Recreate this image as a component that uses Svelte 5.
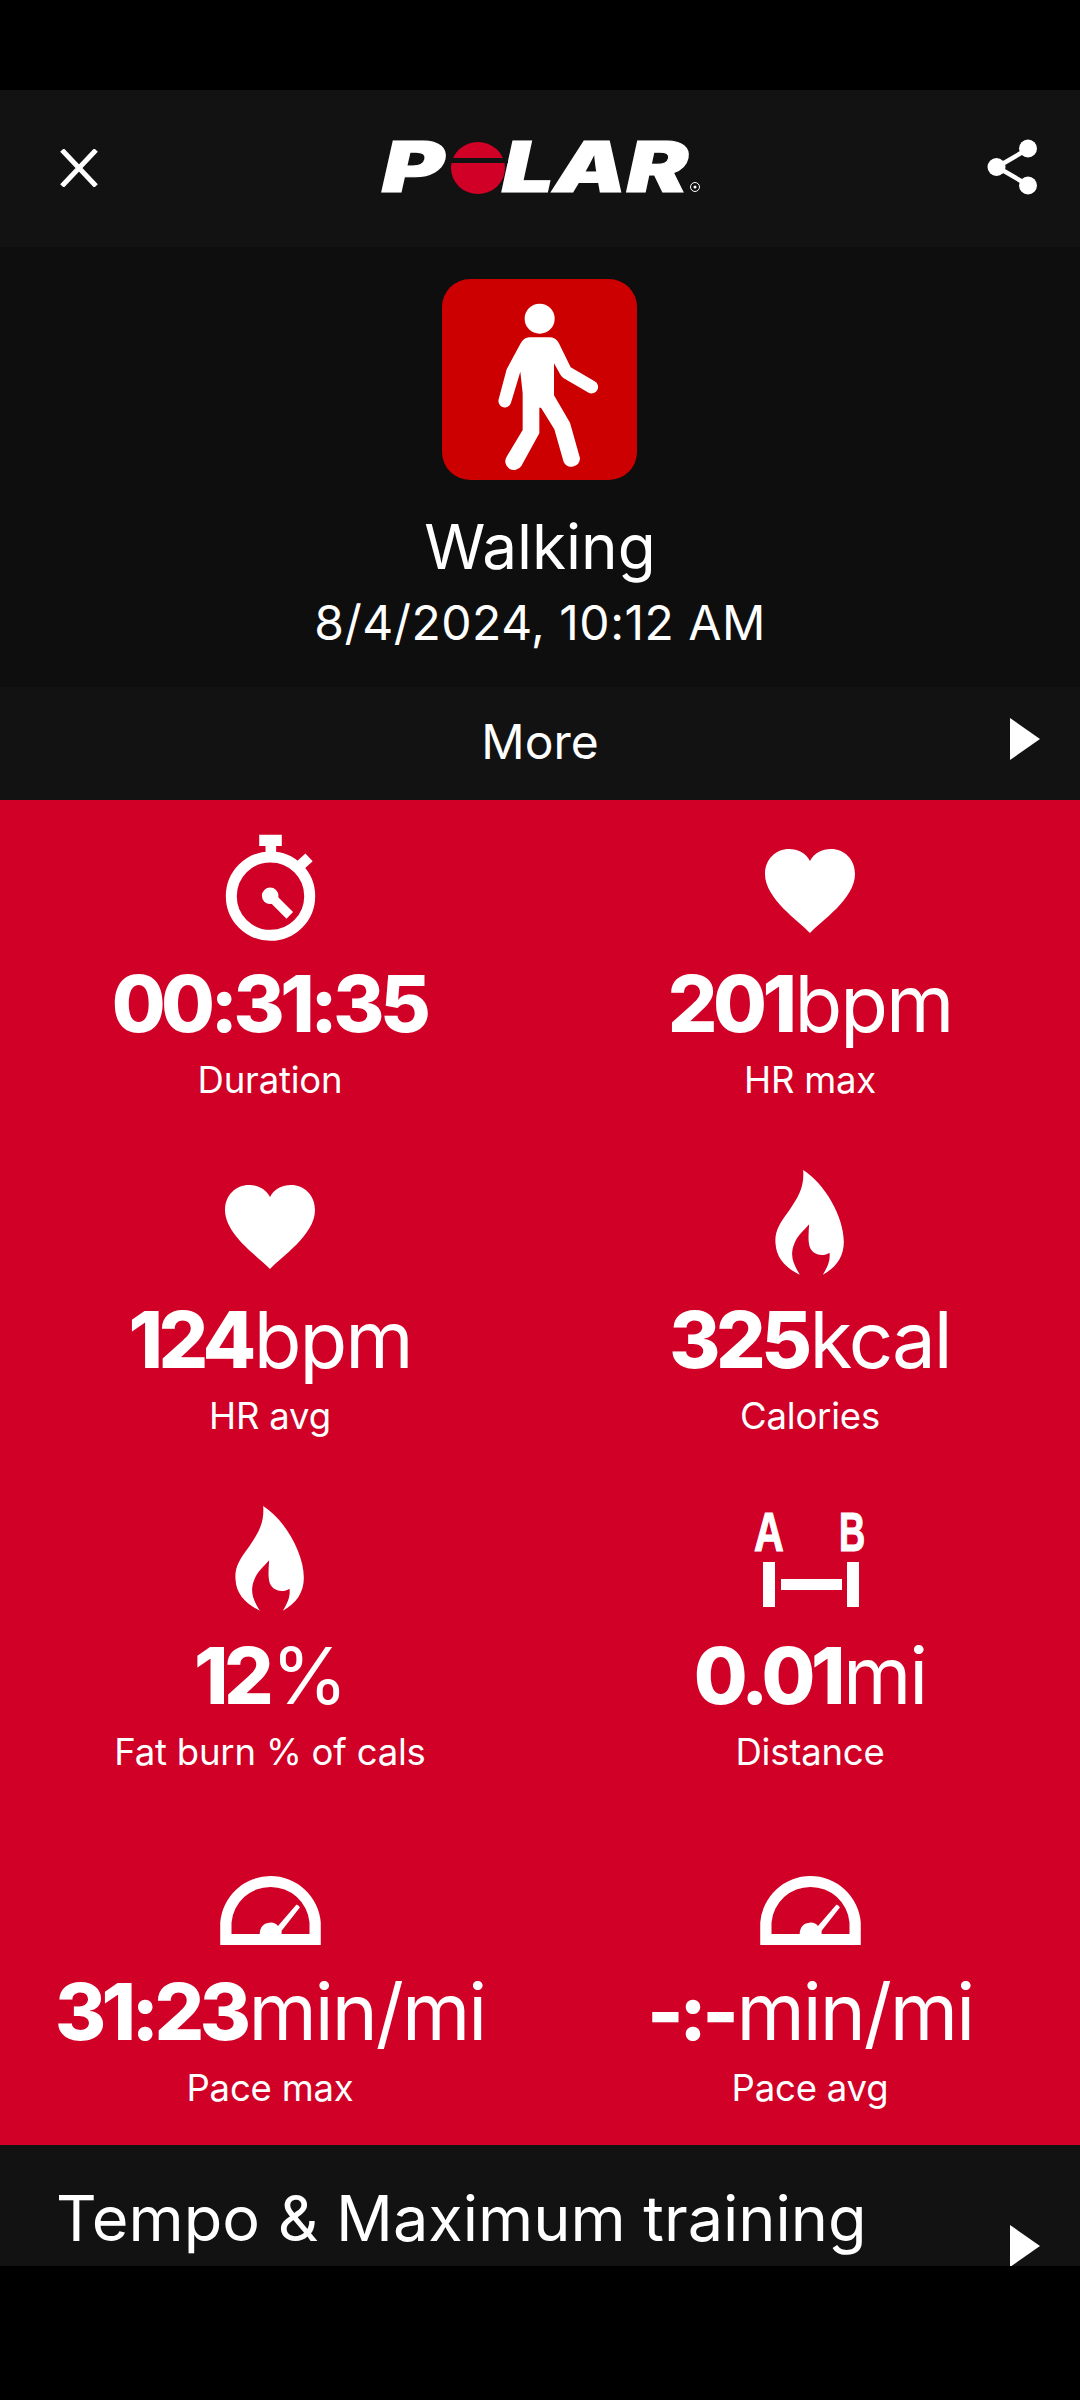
<script>
  const stats = [
    { icon: 'watch', num: '00:31:35', unit: '', label: 'Duration' },
    { icon: 'heart', num: '201', unit: 'bpm', label: 'HR max' },
    { icon: 'heart', num: '124', unit: 'bpm', label: 'HR avg' },
    { icon: 'flame', num: '325', unit: 'kcal', label: 'Calories' },
    { icon: 'flame', num: '12', unit: '%', label: 'Fat burn % of cals' },
    { icon: 'dist', num: '0.01', unit: 'mi', label: 'Distance' },
    { icon: 'gauge', num: '31:23', unit: 'min/mi', label: 'Pace max' },
    { icon: 'gauge', num: '-:-', unit: 'min/mi', label: 'Pace avg' }
  ];
</script>

<div class="screen">
  <div class="status"></div>
  <header class="top">
    <svg class="close" viewBox="0 0 38 38"><path d="M2 1 L36 37 M36 1 L2 37" stroke="#fff" stroke-width="5" /></svg>
    <svg class="logo" viewBox="-20 -30 357 112">
      <g class="logotext">
        <text x="-2" y="50" textLength="62" lengthAdjust="spacingAndGlyphs">P</text>
        <text x="118" y="50" textLength="186" lengthAdjust="spacingAndGlyphs">LAR</text>
      </g>
      <ellipse cx="94" cy="26" rx="27" ry="26" fill="#d00027" />
      <path d="M64 16 H124 V21 H64 Z" fill="#121212" />
      <circle cx="311" cy="45" r="4.5" fill="none" stroke="#fff" stroke-width="1" />
      <circle cx="311" cy="45" r="1.5" fill="#fff" />
    </svg>
    <svg class="share" viewBox="0 0 50 56">
      <path d="M41 10 L10 28 L41 46" fill="none" stroke="#fff" stroke-width="4.5" />
      <circle cx="41" cy="9.5" r="9" fill="#fff" />
      <circle cx="9.5" cy="28" r="9" fill="#fff" />
      <circle cx="41" cy="46.5" r="9" fill="#fff" />
    </svg>
  </header>

  <section class="hero">
    <div class="tile">
      <svg viewBox="126 57 585 603">
        <circle cx="419" cy="176" r="45" fill="#fff" />
        <path fill="#fff" d="M388 232 H448 Q466 232 476 248 L512 322 L584 364 A18 18 0 0 1 566 398 L490 354 Q484 350 480 342 L462 310 V406 L510 488 L540 595 A26 26 0 0 1 491 606 L463 508 L423 443 H418 V520 L364 618 A26 26 0 0 1 320 590 L368 510 V400 L361 335 L333 428 A19 19 0 0 1 296 418 L320 328 L362 250 Q372 232 388 232 Z" />
      </svg>
    </div>
    <div class="title">Walking</div>
    <div class="date">8/4/2024, 10:12 AM</div>
  </section>

  <div class="more">
    <span>More</span>
    <svg class="arrow" viewBox="0 0 30 42"><path d="M0 0 L30 21 L0 42 Z" fill="#fff" /></svg>
  </div>

  <section class="grid">
    {#each stats as s}
      <div class="cell">
        <div class="icon">
          {#if s.icon === 'watch'}
            <svg class="i-watch" viewBox="370 40 280 325">
              <circle cx="510" cy="227" r="118" fill="none" stroke="#fff" stroke-width="33" />
              <path fill="#fff" d="M476 42 H544 V76 H527 V100 H495 V76 H476 Z" />
              <path d="M598 136 L626 110" stroke="#fff" stroke-width="32" />
              <circle cx="509" cy="226" r="25" fill="#fff" />
              <path d="M509 226 L568 285" stroke="#fff" stroke-width="28" />
            </svg>
          {:else if s.icon === 'heart'}
            <svg class="i-heart" viewBox="0 0 90 84">
              <path fill="#fff" d="M45 84 C34 72 0 50 0 25 C0 10 11 0 24 0 C33 0 41 4 45 12 C49 4 57 0 66 0 C79 0 90 10 90 25 C90 50 56 72 45 84 Z" />
            </svg>
          {:else if s.icon === 'flame'}
            <svg class="i-flame" viewBox="162 30 206 315">
              <path fill="#fff" d="M246 30 C250 80 232 110 205 150 C175 190 160 215 163 250 C165 295 195 325 236 344 C215 310 205 285 220 250 C230 225 250 210 264 193 C262 220 260 245 266 262 C275 285 305 292 325 278 C328 300 320 320 305 344 C345 322 368 290 368 245 C368 170 310 70 246 30 Z" />
            </svg>
          {:else if s.icon === 'dist'}
            <svg class="i-dist" viewBox="-20 -30 152 156">
              <text class="ab" transform="translate(0 39) scale(.75 1)" x="0" y="0">A</text>
              <text class="ab" transform="translate(85 39) scale(.66 1)" x="0" y="0">B</text>
              <rect x="9" y="50" width="12" height="45" fill="#fff" />
              <rect x="93" y="50" width="12" height="45" fill="#fff" />
              <rect x="27" y="67" width="61" height="11" fill="#fff" />
            </svg>
          {:else}
            <svg class="i-gauge" viewBox="88 45 303 220">
              <path fill="#fff" fill-rule="evenodd" d="M88 265 V197 A152 152 0 0 1 391 197 V265 Z M122 232 H207 Q207 200 240 197 Q255 197 262 208 L318 143 Q326 146 328 152 L273 222 V232 H357 V197 A118 118 0 0 0 122 197 Z" />
            </svg>
          {/if}
        </div>
        <div class="value"><b>{s.num}</b><span class="unit">{s.unit}</span></div>
        <div class="label">{s.label}</div>
      </div>
    {/each}
  </section>

  <div class="footer">
    <span class="ftext">Tempo &amp; Maximum training</span>
    <svg class="arrow farrow" viewBox="0 0 30 42"><path d="M0 0 L30 21 L0 42 Z" fill="#fff" /></svg>
  </div>
</div>

<style>
  :global(body) { margin: 0; background: #000; }
  .screen {
    width: 1080px; height: 2400px; background: #000; color: #fff; overflow: hidden;
    display: flex; flex-direction: column;
    font-family: Inter, "Noto Sans", sans-serif;
  }
  .status { height: 90px; flex: none; }
  .top {
    height: 157px; flex: none; background: #121212; box-sizing: border-box;
    display: flex; align-items: center; justify-content: space-between;
    padding: 0 43px 0 60px;
  }
  .close { width: 38px; height: 38px; margin-top: -2px; }
  .logo { width: 357px; height: 112px; margin: -2px 0 0 0; flex: none; }
  .logotext text { font: italic 900 70px Inter, sans-serif; fill: #fff; stroke: #fff; stroke-width: 1.2px; }
  .share { width: 50px; height: 56px; margin-top: -3px; }
  .hero {
    height: 440px; flex: none; background: #0e0e0e; box-sizing: border-box;
    display: flex; flex-direction: column; align-items: center; padding-top: 32px;
  }
  .tile {
    width: 195px; height: 201px; border-radius: 28px; background: #cc0000; margin-right: 2px;
  }
  .tile svg { display: block; width: 195px; height: 201px; }
  .title { font-size: 62px; line-height: 72px; margin-top: 31px; }
  .date { font-size: 48px; line-height: 58px; margin-top: 11px; letter-spacing: 0.5px; }
  .more {
    height: 113px; flex: none; background: #121212; position: relative; box-sizing: border-box;
    display: flex; align-items: center; justify-content: center; padding-bottom: 5px;
    font-size: 48px;
  }
  .arrow { width: 30px; height: 42px; position: absolute; right: 40px; top: 31px; }
  .grid {
    height: 1345px; flex: none; background: #d00027; box-sizing: border-box;
    display: grid; grid-template-columns: 1fr 1fr; grid-template-rows: repeat(4, 336px);
    padding-top: 33px;
  }
  .cell { display: flex; flex-direction: column; align-items: center; }
  .icon { height: 112px; display: flex; align-items: center; justify-content: center; width: 100%; }
  .icon svg { display: block; flex: none; }
  .i-watch { width: 93px; height: 108px; margin-top: -2px; }
  .i-heart { width: 90px; height: 84px; margin-top: 4px; }
  .i-flame { width: 69px; height: 105px; margin: -5px 2px 0 0; }
  .i-dist { width: 152px; height: 156px; margin: -3px 0 0 -1px; }
  .i-gauge { width: 101px; height: 73px; align-self: flex-end; margin-bottom: 8px; }
  .ab { font: 700 55px "Liberation Sans", sans-serif; fill: #fff; stroke: #fff; stroke-width: 1.2px; }
  .value { font-size: 78px; line-height: 94px; margin-top: 12px; white-space: nowrap; }
  .value b { font-weight: 800; letter-spacing: -4.5px; margin-right: 2px; }
  .unit { letter-spacing: -2px; }
  .label { font-size: 36.5px; line-height: 42px; margin-top: 8px; white-space: nowrap; letter-spacing: -0.2px; }
  .footer {
    height: 121px; flex: none; background: #121212; position: relative; overflow: hidden;
    box-sizing: border-box; padding: 37px 0 0 56px;
  }
  .ftext { display: block; font-size: 63px; line-height: 72px; }
  .farrow { top: 80px; }
</style>
